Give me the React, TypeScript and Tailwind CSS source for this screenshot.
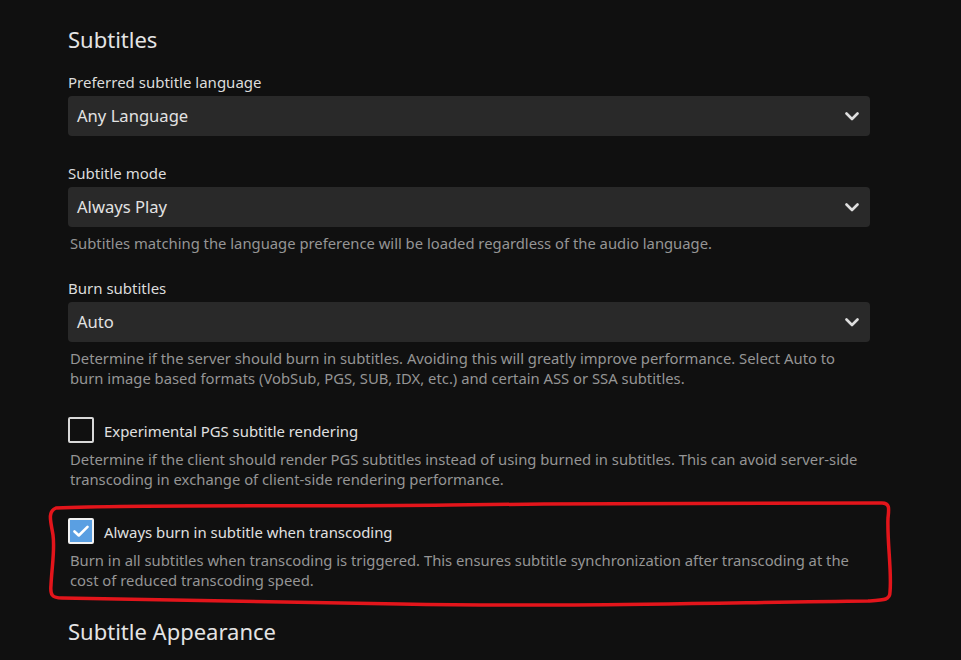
import type { ReactNode } from "react";

const FONT = "font-['Noto_Sans',_'Open_Sans',_sans-serif]";

function Chevron() {
  return (
    <svg width="14" height="9" viewBox="0 0 14 9" className="shrink-0">
      <polyline points="1.5,1.5 7,7 12.5,1.5" fill="none" stroke="#dedede" strokeWidth="2.6" strokeLinecap="round" strokeLinejoin="round" />
    </svg>
  );
}

function SelectField({ label, value, top, children }: { label: string; value: string; top: string; children?: ReactNode }) {
  return (
    <div className={top}>
      <div className="h-5 text-[15px] leading-5 text-[#dcdcdc]">{label}</div>
      <div className="mt-1 flex h-10 items-center justify-between rounded-[4px] bg-[#292929] pl-[9px] pr-[11px]">
        <span className="text-[16.6px] text-[#e2e2e2]">{value}</span>
        <Chevron />
      </div>
      {children}
    </div>
  );
}

function Description({ children }: { children: ReactNode }) {
  return <p className="mt-[6px] pl-[2px] text-[14.8px] leading-5 text-[#959595]">{children}</p>;
}

function Checkbox({ label, checked, top }: { label: string; checked?: boolean; top: string }) {
  return (
    <div className={`flex h-[26px] items-center gap-[10px] ${top}`}>
      {checked ? (
        <span className="flex h-[26px] w-[26px] items-center justify-center rounded-[2px] border-2 border-[#f2f2f2] bg-[#5a9fe2]">
          <svg width="16" height="12" viewBox="0 0 16 12">
            <polyline points="1.5,6.5 5.8,10.5 14.5,1.8" fill="none" stroke="#fff" strokeWidth="2.6" strokeLinecap="round" strokeLinejoin="round" />
          </svg>
        </span>
      ) : (
        <span className="h-[26px] w-[26px] rounded-[2px] border-2 border-[#d8d8d8]" />
      )}
      <span className="mt-[3px] text-[14.9px] text-[#e0e0e0]">{label}</span>
    </div>
  );
}

export default function App() {
  return (
    <div className={`relative h-[660px] w-full overflow-hidden bg-[#101010] ${FONT}`}>
      <div className="ml-[68px] w-[802px] pt-[25px]">
        <h2 className="h-7 text-[22px] leading-7 text-[#e4e4e4]">Subtitles</h2>

        <SelectField label="Preferred subtitle language" value="Any Language" top="mt-[19px]" />

        <SelectField label="Subtitle mode" value="Always Play" top="mt-[27px]">
          <Description>Subtitles matching the language preference will be loaded regardless of the audio language.</Description>
        </SelectField>

        <SelectField label="Burn subtitles" value="Auto" top="mt-[25px]">
          <Description>
            Determine if the server should burn in subtitles. Avoiding this will greatly improve performance. Select Auto to burn image based formats (VobSub, PGS, SUB, IDX, etc.) and certain ASS or SSA subtitles.
          </Description>
        </SelectField>

        <Checkbox label="Experimental PGS subtitle rendering" top="mt-[29px]" />
        <Description>
          Determine if the client should render PGS subtitles instead of using burned in subtitles. This can avoid server-side transcoding in exchange of client-side rendering performance.
        </Description>

        <Checkbox label="Always burn in subtitle when transcoding" checked top="mt-[29px]" />
        <Description>
          Burn in all subtitles when transcoding is triggered. This ensures subtitle synchronization after transcoding at the cost of reduced transcoding speed.
        </Description>

        <h2 className="mt-[27px] h-7 text-[22px] leading-7 text-[#e4e4e4]">Subtitle Appearance</h2>
      </div>

      {/* hand-drawn red annotation */}
      <svg className="pointer-events-none absolute left-0 top-0" width="961" height="660" viewBox="0 0 961 660">
        <path
          d="M56 508 C 150 504, 300 507, 450 505 S 760 503, 882 503 C 890 503, 889 509, 888 518 C 887 542, 892 572, 890 592 C 890 600, 885 600, 868 601 C 700 603, 560 607, 400 604 S 150 600, 62 598 C 52 598, 50 595, 51 585 C 52 565, 55 550, 53 535 C 51 522, 47 512, 56 508 Z"
          fill="none"
          stroke="#e3151b"
          strokeWidth="3.5"
          strokeLinejoin="round"
        />
      </svg>
    </div>
  );
}
